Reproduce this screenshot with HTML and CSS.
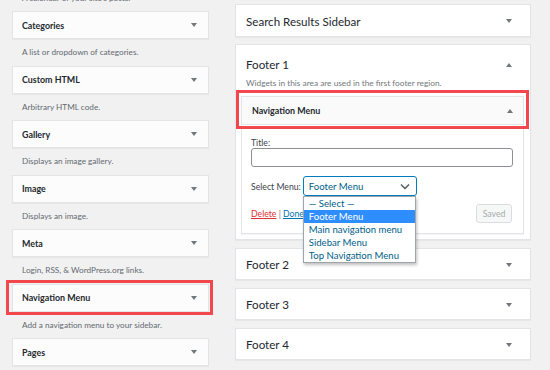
FILE: index.html
```html
<!DOCTYPE html>
<html>
<head>
<meta charset="utf-8">
<link rel="stylesheet" href="styles.css">
</head>
<body>
<div class="page">
  <div class="left">
    <p class="desc">A calendar of your site's posts.</p>
    <div class="wbox"><span>Categories</span><i class="tri down"></i></div>
    <p class="desc">A list or dropdown of categories.</p>
    <div class="wbox"><span>Custom HTML</span><i class="tri down"></i></div>
    <p class="desc">Arbitrary HTML code.</p>
    <div class="wbox"><span>Gallery</span><i class="tri down"></i></div>
    <p class="desc">Displays an image gallery.</p>
    <div class="wbox"><span>Image</span><i class="tri down"></i></div>
    <p class="desc">Displays an image.</p>
    <div class="wbox"><span>Meta</span><i class="tri down"></i></div>
    <p class="desc">Login, RSS, &amp; WordPress.org links.</p>
    <div class="wbox marked-left"><span>Navigation Menu</span><i class="tri down"></i></div>
    <p class="desc">Add a navigation menu to your sidebar.</p>
    <div class="wbox"><span>Pages</span><i class="tri down"></i></div>
  </div>
  <div class="right">
    <div class="sbox"><span>Search Results Sidebar</span><i class="tri down"></i></div>
    <div class="sbox open">
      <div class="shead"><span>Footer 1</span><i class="tri up"></i></div>
      <p class="sdesc">Widgets in this area are used in the first footer region.</p>
      <div class="widget">
        <div class="whead marked-right"><span>Navigation Menu</span><i class="tri up"></i></div>
        <div class="wbody">
          <label class="lbl">Title:</label>
          <div class="input"></div>
          <div class="selrow">
            <span class="lbl">Select Menu:</span>
            <div class="selwrap">
              <div class="select"><span>Footer Menu</span>
                <svg class="chev" width="10" height="7" viewBox="0 0 10 7"><path d="M1 1.5 L5 5.5 L9 1.5" fill="none" stroke="#50575e" stroke-width="1.4"/></svg>
              </div>
              <ul class="dropdown">
                <li>— Select —</li>
                <li class="hl">Footer Menu</li>
                <li>Main navigation menu</li>
                <li>Sidebar Menu</li>
                <li>Top Navigation Menu</li>
              </ul>
            </div>
          </div>
          <div class="actions">
            <span class="links"><a class="del">Delete</a> | <a class="done">Done</a></span>
            <span class="saved">Saved</span>
          </div>
        </div>
      </div>
    </div>
    <div class="sbox"><span>Footer 2</span><i class="tri down"></i></div>
    <div class="sbox"><span>Footer 3</span><i class="tri down"></i></div>
    <div class="sbox"><span>Footer 4</span><i class="tri down"></i></div>
  </div>
</div>
</body>
</html>
```
FILE: styles.css
```css
html, body {
  margin: 0;
  padding: 0;
  background: #f1f1f1;
  font-family: Lato, "Open Sans", sans-serif;
  color: #23282d;
  overflow: hidden;
}
.page {
  display: flex;
  gap: 26px;
  height: 370px;
  overflow: hidden;
}
.left {
  width: 197px;
  margin-left: 12px;
  margin-top: -15.5px;
  display: flex;
  flex-direction: column;
}
.desc {
  margin: 0;
  height: 26.5px;
  line-height: 26.5px;
  font-size: 8.2px;
  color: #646970;
  padding-left: 10px;
  white-space: nowrap;
}
.wbox {
  position: relative;
  box-sizing: border-box;
  height: 28px;
  flex: none;
  background: #fcfcfc;
  border: 1px solid #e2e4e7;
  box-shadow: 0 1px 1px rgba(0,0,0,.04);
  display: flex;
  align-items: center;
  justify-content: space-between;
  padding: 0 11px 0 9px;
  font-size: 8.9px;
  font-weight: 700;
  color: #23282d;
}
.tri {
  display: block;
  width: 0;
  height: 0;
  border-left: 3px solid transparent;
  border-right: 3px solid transparent;
}
.tri.down { border-top: 4px solid #72777c; }
.tri.up { border-bottom: 4px solid #72777c; }
.marked-left::after {
  content: "";
  position: absolute;
  left: -7px;
  top: -5px;
  right: -5px;
  bottom: -4px;
  border: 3px solid #f1474d;
}
.right {
  width: 296px;
  padding-top: 4px;
  display: flex;
  flex-direction: column;
  gap: 7.5px;
}
.sbox {
  box-sizing: border-box;
  height: 32.5px;
  background: #fff;
  border: 1px solid #e2e4e7;
  box-shadow: 0 1px 1px rgba(0,0,0,.04);
  display: flex;
  align-items: center;
  justify-content: space-between;
  padding: 2px 18px 0 10px;
  font-size: 11.6px;
  flex: none;
}
.sbox.open {
  height: auto;
  display: block;
  padding: 0 6px 5px 5px;
}
.shead {
  display: flex;
  align-items: center;
  justify-content: space-between;
  padding: 7px 12px 0 5px;
  box-sizing: border-box;
  height: 32px;
}
.sdesc {
  margin: 0;
  padding-left: 5px;
  font-size: 8.3px;
  color: #72777c;
  line-height: 13px;
  height: 19px;
}
.widget {
  background: #fff;
  border: 1px solid #e2e4e7;
  box-shadow: 0 1px 1px rgba(0,0,0,.04);
}
.whead {
  position: relative;
  height: 27px;
  background: #fafafa;
  border-bottom: 1px solid #e2e4e7;
  display: flex;
  align-items: center;
  justify-content: space-between;
  padding: 0 10px 0 10px;
  font-size: 8.9px;
  font-weight: 700;
}
.marked-right::after {
  content: "";
  position: absolute;
  left: -6px;
  top: -7px;
  right: -6px;
  bottom: -5px;
  border: 3px solid #f1474d;
}
.wbody {
  padding: 11px 10px 0 9px;
  height: 108px;
  box-sizing: border-box;
  display: flex;
  flex-direction: column;
}
.lbl {
  font-size: 8.7px;
  color: #3c434a;
  line-height: 13px;
}
.input {
  margin-top: -1px;
  height: 19px;
  box-sizing: border-box;
  border: 1px solid #8c8f94;
  border-radius: 3px;
  background: #fff;
}
.selrow {
  margin-top: 9px;
  display: flex;
  align-items: center;
  gap: 2px;
}
.selwrap {
  position: relative;
}
.select {
  box-sizing: border-box;
  width: 114px;
  height: 20px;
  border: 1px solid #007cba;
  border-radius: 3px;
  display: flex;
  align-items: center;
  justify-content: space-between;
  padding: 0 6px 0 5px;
  font-size: 9.6px;
  color: #016087;
}
.chev { display: block; }
.dropdown {
  position: absolute;
  left: 0;
  top: 20px;
  width: 113px;
  box-sizing: border-box;
  margin: 0;
  padding: 0;
  list-style: none;
  background: #fff;
  border: 1px solid #a0a5aa;
  box-shadow: 1px 2px 3px rgba(0,0,0,.25);
  z-index: 5;
}
.dropdown li {
  height: 13px;
  line-height: 13px;
  padding-left: 5px;
  font-size: 9.6px;
  color: #016087;
  white-space: nowrap;
}
.dropdown li.hl {
  background: #2f8eff;
  color: #fff;
}
.actions {
  margin-top: 8px;
  display: flex;
  align-items: center;
  justify-content: space-between;
  padding-right: 1px;
}
.links {
  font-size: 8.7px;
  color: #72777c;
}
.del { color: #dc3232; text-decoration: underline; }
.done { color: #0073aa; text-decoration: underline; }
.saved {
  box-sizing: border-box;
  width: 36px;
  height: 19px;
  line-height: 17px;
  text-align: center;
  border: 1px solid #dcdcde;
  border-radius: 3px;
  background: #f6f7f7;
  color: #a7aaad;
  font-size: 8.7px;
}
```
